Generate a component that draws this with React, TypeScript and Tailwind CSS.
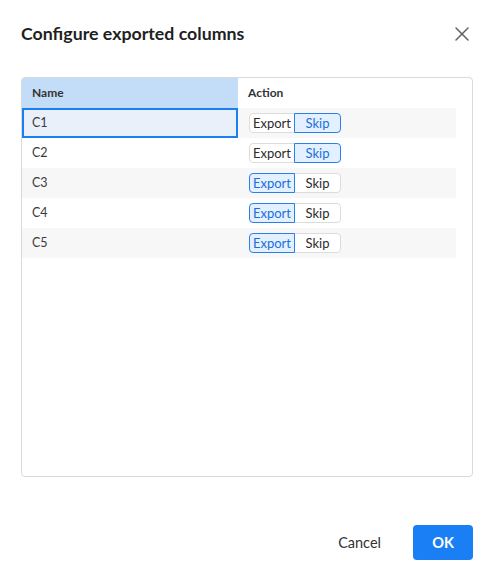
import { X } from "lucide-react";

type Choice = "export" | "skip";

type ColumnRow = {
  name: string;
  action: Choice;
};

const rows: ColumnRow[] = [
  { name: "C1", action: "skip" },
  { name: "C2", action: "skip" },
  { name: "C3", action: "export" },
  { name: "C4", action: "export" },
  { name: "C5", action: "export" },
];

function Segment({ value }: { value: Choice }) {
  const on = "z-10 border-[#2a80ea] bg-[#e3f0ff] text-[#1a6fdc]";
  const off = "border-[#dcdcdc] bg-white text-[#2b2b2b]";

  return (
    <div className="flex h-[20px] text-[13px] leading-none">
      <span
        className={`flex w-[46px] items-center justify-center rounded-l-[4px] border ${
          value === "export" ? on : off
        }`}
      >
        Export
      </span>
      <span
        className={`-ml-px flex w-[47px] items-center justify-center rounded-r-[4px] border ${
          value === "skip" ? on : off
        }`}
      >
        Skip
      </span>
    </div>
  );
}

export default function App() {
  return (
    <div
      className="flex h-[581px] w-[492px] flex-col bg-white text-[#2b2b2b]"
      style={{ fontFamily: "Lato, 'Noto Sans', sans-serif" }}
    >
      <div className="flex h-[66px] items-center justify-between pl-[21px] pr-[18px] pt-[1px]">
        <h1 className="text-[17.75px] font-bold text-[#1f1f1f]">
          Configure exported columns
        </h1>
        <X size={24} strokeWidth={1.5} className="text-[#5f6368]" />
      </div>

      <div className="ml-[21px] mt-[11px] h-[400px] w-[452px] overflow-hidden rounded-[4px] border border-[#d9d9d9]">
        <div className="w-[434px]">
          <div className="grid h-[30px] grid-cols-[216px_218px] text-[12px] font-bold text-[#333]">
            <div className="flex items-center bg-[#c3ddf8] pl-[10px]">Name</div>
            <div className="flex items-center pl-[10px]">Action</div>
          </div>
          {rows.map((row, i) => (
            <div
              key={row.name}
              className={`grid h-[30px] grid-cols-[216px_218px] text-[12.5px] ${
                i % 2 === 0 ? "bg-[#f7f7f7]" : "bg-white"
              }`}
            >
              <div
                className={`flex items-center text-[#3a3a3a] ${
                  i === 0
                    ? "border-2 border-[#1a7ff0] bg-[#e9f0f9] pl-[8px]"
                    : "pl-[10px]"
                }`}
              >
                {row.name}
              </div>
              <div className="flex items-center pl-[11px]">
                <Segment value={row.action} />
              </div>
            </div>
          ))}
        </div>
      </div>

      <div className="mt-[48px] flex items-center justify-end gap-[32px] pr-[19px]">
        <button className="text-[14.5px] text-[#333]">Cancel</button>
        <button className="h-[35px] w-[60px] rounded-[4px] bg-[#1a7ff5] text-[14.5px] font-bold text-white">
          OK
        </button>
      </div>
    </div>
  );
}
